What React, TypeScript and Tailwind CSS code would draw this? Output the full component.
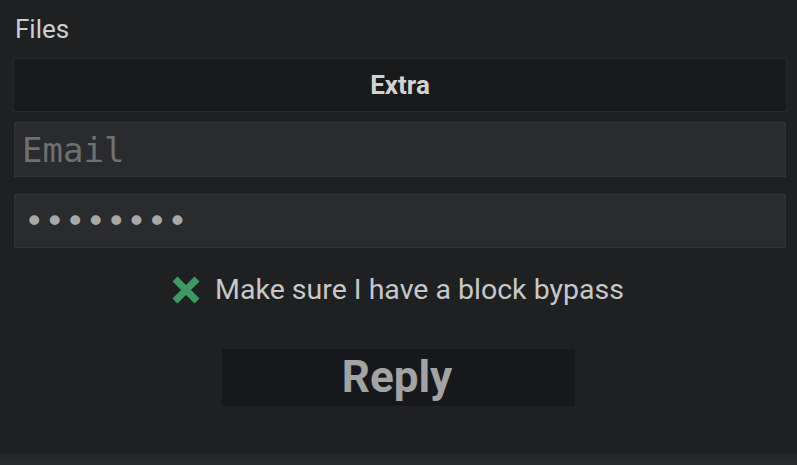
import { useState } from "react";

function GreenX() {
  return (
    <svg width="28" height="28" viewBox="0 0 28 28" className="shrink-0">
      <path d="M3 3 L25 25 M25 3 L3 25" stroke="#3c9a63" strokeWidth="7" strokeLinecap="butt" />
    </svg>
  );
}

export default function App() {
  const [email, setEmail] = useState("");
  const [password, setPassword] = useState("password");

  return (
    <div className="w-[797px] h-[465px] bg-[#1f2022] flex flex-col overflow-hidden font-['Roboto',sans-serif]">
      <div className="flex-1 flex flex-col pl-[13px] pr-[10px]">
        <div className="pl-[2px] pt-[13px] h-[58px] text-[26px] leading-[32px] text-[#cfcfcf]">Files</div>

        {/* Extra */}
        <div className="h-[54px] bg-[#18191b] border border-[#28292c] flex items-center justify-center text-[26px] font-bold text-[#d2d2d2]">
          Extra
        </div>

        {/* Inputs */}
        <input
          type="text"
          placeholder="Email"
          value={email}
          onChange={(e) => setEmail(e.target.value)}
          className="mt-[10px] mx-[1px] h-[55px] bg-[#2a2b2e] border border-[#333437] px-[7px] text-[34px] text-[#c0c0c0] placeholder-[#6f7072] font-['DejaVu_Sans_Mono',monospace] outline-none"
        />
        <input
          type="password"
          value={password}
          onChange={(e) => setPassword(e.target.value)}
          className="mt-[17px] mx-[1px] h-[54px] bg-[#2a2b2e] border border-[#333437] px-[9px] text-[34px] text-[#a8a8a8] font-['DejaVu_Sans_Mono',monospace] outline-none"
        />

        {/* Bypass */}
        <div className="mt-[27px] flex items-center justify-center gap-[15px] h-[30px] pr-[4px]">
          <GreenX />
          <span className="text-[28.5px] text-[#c8c8c8] leading-[30px]">Make sure I have a block bypass</span>
        </div>

        {/* Reply */}
        <div className="mt-[44px] flex justify-center pr-[3px]">
          <button className="w-[353px] h-[57px] bg-[#17181b] text-[44px] font-bold text-[#a3a3a3] leading-none flex items-center justify-center pb-[2px] pr-[3px]">
            Reply
          </button>
        </div>
      </div>
      <div className="h-[12px] bg-gradient-to-b from-[#242528] to-[#2a2b2f]" />
    </div>
  );
}
